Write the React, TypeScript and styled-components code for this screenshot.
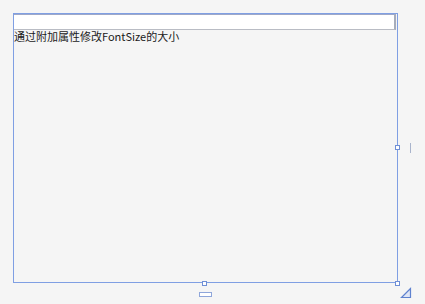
import React from 'react';
import styled, {createGlobalStyle} from 'styled-components';

const GlobalStyle = createGlobalStyle`
  html, body {
    margin: 0;
    padding: 0;
    background: #f5f5f5;
  }
`

const Canvas = styled.div`
  width: 425px;
  height: 304px;
  box-sizing: border-box;
  padding: 13px 0 0 13px;
  background: #f5f5f5;
`

const Frame = styled.div`
  position: relative;
  width: 385px;
  height: 270px;
  box-sizing: border-box;
  border: 1px solid #7f9fe3;
  display: flex;
  flex-direction: column;
`

const TextBox = styled.div`
  height: 16px;
  margin-right: 1px;
  box-sizing: border-box;
  background: #fff;
  border-top: 1px solid #9ea8c9;
  border-right: 2px solid #a7adbb;
  border-bottom: 1px solid #b9bcc4;
`

const Caption = styled.div`
  font-family: "Noto Sans CJK SC", "Microsoft YaHei", sans-serif;
  font-size: 11px;
  line-height: 13px;
  color: #1a1a1a;
`

const Handle = styled.div<{ $x: number; $y: number }>`
  position: absolute;
  left: ${p => p.$x}px;
  top: ${p => p.$y}px;
  width: 5px;
  height: 5px;
  box-sizing: border-box;
  border: 1px solid #6f8fd6;
  background: #fff;
`

const SideGrip = styled.div`
  position: absolute;
  left: 396px;
  top: 129px;
  width: 1px;
  height: 10px;
  background: #a9b4cc;
`

const BottomGrip = styled.div`
  position: absolute;
  left: 185px;
  top: 278px;
  width: 13px;
  height: 5px;
  box-sizing: border-box;
  border: 1px solid #8fa6da;
  background: #fff;
`

const CornerGrip = styled.svg`
  position: absolute;
  left: 386px;
  top: 273px;
`

export default function App() {
    return (
        <Canvas>
            <GlobalStyle/>
            <Frame>
                <TextBox/>
                <Caption>通过附加属性修改FontSize的大小</Caption>
                <Handle $x={381} $y={131}/>
                <Handle $x={188} $y={267}/>
                <Handle $x={381} $y={267}/>
                <SideGrip/>
                <BottomGrip/>
                <CornerGrip width="12" height="12" viewBox="0 0 12 12">
                    <path d="M1.5 10.5 L10.5 1.5 L10.5 10.5 Z" fill="#dfe6f6" stroke="#5f82cf" strokeWidth="1.2"/>
                </CornerGrip>
            </Frame>
        </Canvas>
    );
}
